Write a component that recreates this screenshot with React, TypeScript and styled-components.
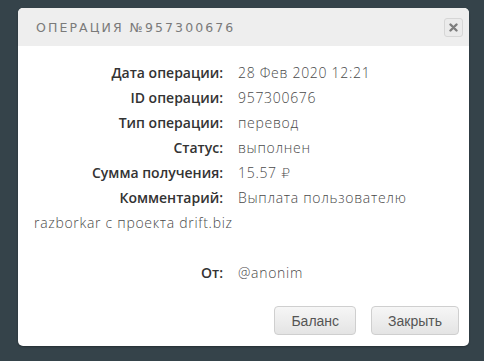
import styled, { createGlobalStyle } from "styled-components";

//style variables
const pageColor = "#35434a";
const headerColor = "#eeeeee";
const labelColor = "#333333";
const valueColor = "#4a4a4a";

const GlobalStyle = createGlobalStyle`
  html, body {
    margin: 0;
    padding: 0;
    background-color: ${pageColor};
    height: 100%;
  }
  body {
    font-family: "Open Sans", "DejaVu Sans", sans-serif;
  }
`;

const Page = styled.div`
  width: 484px;
  height: 361px;
  padding: 8px 15px 0 18px;
  box-sizing: border-box;
`;

const Modal = styled.div`
  width: 451px;
  height: 338px;
  background: #fff;
  border-radius: 5px;
  display: flex;
  flex-direction: column;
  overflow: hidden;
  box-shadow: 0 1px 2px rgba(0, 0, 0, 0.3);
`;

const Header = styled.div`
  height: 38px;
  flex: none;
  background: ${headerColor};
  display: flex;
  align-items: center;
  justify-content: space-between;
  padding: 0 6px 0 18px;
`;

const Title = styled.h3`
  margin: 0;
  font-family: "DejaVu Sans", Verdana, sans-serif;
  font-size: 12.5px;
  font-weight: normal;
  letter-spacing: 2.1px;
  color: #7a7a7a;
  text-transform: uppercase;
`;

const CloseButton = styled.button`
  width: 19px;
  height: 19px;
  padding: 0;
  border: 1px solid #d6d6d6;
  border-radius: 3px;
  background: #ebebeb;
  display: flex;
  align-items: center;
  justify-content: center;
  cursor: pointer;
`;

const Body = styled.div`
  flex: 1;
  padding: 14px 14px 0 16px;
  font-size: 14px;
  line-height: 25px;
`;

const Row = styled.div`
  min-height: 25px;
  color: ${valueColor};
  font-weight: 300;
  letter-spacing: 0.7px;
`;

const Label = styled.span`
  display: inline-block;
  width: 189px;
  margin-right: 15px;
  text-align: right;
  font-weight: 600;
  letter-spacing: 0;
  color: ${labelColor};
`;

const Footer = styled.div`
  display: flex;
  justify-content: flex-end;
  gap: 15px;
  padding: 0 10px 11px 0;
`;

const Button = styled.button`
  height: 29px;
  padding: 0 16px;
  font-family: "Liberation Sans", Arial, sans-serif;
  font-size: 14px;
  color: #555;
  border: 1px solid #cfcfcf;
  border-radius: 4px;
  background: linear-gradient(#f6f6f6, #e4e4e4);
  cursor: pointer;
`;

const rows = [
  ["Дата операции:", "28 Фев 2020 12:21"],
  ["ID операции:", "957300676"],
  ["Тип операции:", "перевод"],
  ["Статус:", "выполнен"],
  ["Сумма получения:", "15.57 ₽"],
  ["Комментарий:", "Выплата пользователю razborkar с проекта drift.biz"],
];

const App = () => {
  return (
    <Page>
      <GlobalStyle />
      <Modal>
        <Header>
          <Title>Операция №957300676</Title>
          <CloseButton aria-label="close">
            <svg width="9" height="9" viewBox="0 0 9 9">
              <path
                d="M1.5 1.5 L7.5 7.5 M7.5 1.5 L1.5 7.5"
                stroke="#7d7d7d"
                strokeWidth="2.4"
                strokeLinecap="round"
              />
            </svg>
          </CloseButton>
        </Header>
        <Body>
          {rows.map(([label, value]) => (
            <Row key={label}>
              <Label>{label}</Label>
              {value}
            </Row>
          ))}
          <Row />
          <Row>
            <Label>От:</Label>@anonim
          </Row>
        </Body>
        <Footer>
          <Button>Баланс</Button>
          <Button>Закрыть</Button>
        </Footer>
      </Modal>
    </Page>
  );
};

export default App;
